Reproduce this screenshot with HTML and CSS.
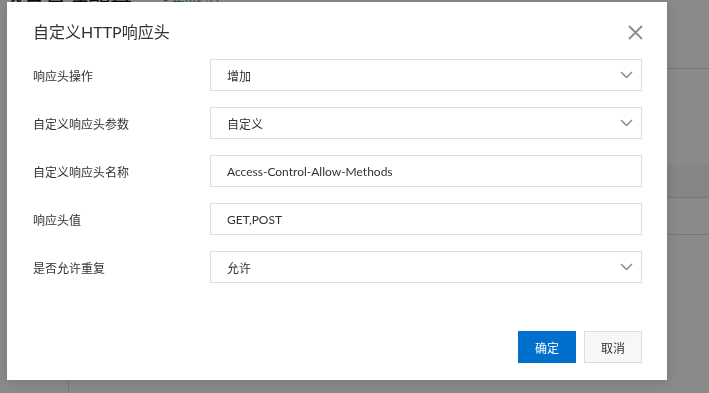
FILE: index.html
```html
<!DOCTYPE html>
<html lang="zh-CN">
<head>
  <meta charset="UTF-8">
  <meta name="viewport" content="width=device-width, initial-scale=1.0">
  <title>自定义HTTP响应头</title>
  <link rel="stylesheet" href="styles.css">
</head>
<body>
  <!-- page behind the dialog -->
  <div class="page">
    <div class="page-head">
      <h2 class="page-title">域名管理配置</h2>
      <span class="page-status">● 正常运行</span>
    </div>
    <div class="page-body">
      <div class="side"></div>
      <div class="main">
        <div class="main-row"></div>
        <div class="main-row shaded"></div>
        <div class="main-row short"></div>
      </div>
    </div>
  </div>

  <div class="mask"></div>

  <!-- dialog -->
  <div class="dialog">
    <div class="dialog-head">
      <h3 class="dialog-title">自定义HTTP响应头</h3>
      <button class="close-btn" aria-label="关闭">
        <svg width="15" height="15" viewBox="0 0 15 15"><path d="M1 1L14 14M14 1L1 14" stroke="#8c8c8c" stroke-width="1.8" fill="none"/></svg>
      </button>
    </div>

    <div class="form">
      <div class="form-row">
        <label class="form-label">响应头操作</label>
        <div class="field select">
          <span>增加</span>
          <svg class="arrow" width="13" height="8" viewBox="0 0 13 8"><path d="M1 1L6.5 6.5L12 1" stroke="#888" stroke-width="1.5" fill="none"/></svg>
        </div>
      </div>
      <div class="form-row">
        <label class="form-label">自定义响应头参数</label>
        <div class="field select">
          <span>自定义</span>
          <svg class="arrow" width="13" height="8" viewBox="0 0 13 8"><path d="M1 1L6.5 6.5L12 1" stroke="#888" stroke-width="1.5" fill="none"/></svg>
        </div>
      </div>
      <div class="form-row">
        <label class="form-label">自定义响应头名称</label>
        <div class="field"><span>Access-Control-Allow-Methods</span></div>
      </div>
      <div class="form-row">
        <label class="form-label">响应头值</label>
        <div class="field"><span>GET,POST</span></div>
      </div>
      <div class="form-row">
        <label class="form-label">是否允许重复</label>
        <div class="field select">
          <span>允许</span>
          <svg class="arrow" width="13" height="8" viewBox="0 0 13 8"><path d="M1 1L6.5 6.5L12 1" stroke="#888" stroke-width="1.5" fill="none"/></svg>
        </div>
      </div>
    </div>

    <div class="dialog-foot">
      <button class="btn btn-primary">确定</button>
      <button class="btn">取消</button>
    </div>
  </div>
</body>
</html>
```

FILE: styles.css
```css
* {
  box-sizing: border-box;
}

body {
  margin: 0;
  font-family: "Lato", "Noto Sans CJK SC", sans-serif;
  color: #333;
  background: #fff;
  height: 100vh;
  overflow: hidden;
}

/* background page */
.page {
  height: 100%;
}

.page-head {
  display: flex;
  align-items: flex-end;
  gap: 30px;
  height: 4px;
  overflow: hidden;
}

.page-title {
  margin: 0;
  font-size: 22px;
  line-height: 24px;
  font-weight: 400;
  color: #111;
  flex-shrink: 0;
}

.page-status {
  font-size: 12px;
  line-height: 12px;
  color: #2e9c3e;
}

.page-body {
  display: flex;
  height: 100%;
}

.side {
  width: 69px;
  border-right: 1px solid #ddd;
}

.main {
  flex: 1;
  padding-top: 64px;
}

.main-row {
  height: 97px;
  border-top: 1px solid #ddd;
}

.main-row.shaded {
  height: 33px;
  background: #f5f5f5;
  border-top: none;
  border-bottom: 1px solid #ddd;
}

.main-row.short {
  height: 37px;
  border-top: none;
  border-bottom: 1px solid #ddd;
}

.mask {
  position: fixed;
  inset: 0;
  background: rgba(0, 0, 0, 0.46);
}

/* dialog */
.dialog {
  position: fixed;
  left: 7px;
  top: 2px;
  width: 660px;
  height: 378px;
  background: #fff;
  padding: 18px 25px 17px 26px;
  display: flex;
  flex-direction: column;
  box-shadow: 0 2px 12px rgba(0, 0, 0, 0.15);
}

.dialog-head {
  display: flex;
  justify-content: space-between;
  align-items: center;
  height: 24px;
}

.dialog-title {
  margin: 0;
  font-size: 16px;
  line-height: 24px;
  font-weight: 400;
  color: #333;
}

.close-btn {
  border: none;
  background: none;
  padding: 0;
  margin-right: -1px;
  width: 15px;
  height: 15px;
  display: flex;
}

.form {
  display: flex;
  flex-direction: column;
  gap: 16px;
  margin-top: 15px;
}

.form-row {
  display: flex;
  align-items: center;
}

.form-label {
  width: 177px;
  font-size: 12px;
  color: #333;
}

.field {
  flex: 1;
  height: 32px;
  border: 1px solid #ddd;
  padding: 0 8px 0 16px;
  display: flex;
  align-items: center;
  justify-content: space-between;
  font-size: 12px;
  color: #333;
}

.dialog-foot {
  margin-top: auto;
  display: flex;
  justify-content: flex-end;
  gap: 8px;
}

.btn {
  width: 58px;
  height: 32px;
  font-family: inherit;
  font-size: 12px;
  color: #333;
  background: #f7f7f7;
  border: 1px solid #ddd;
  padding: 0;
}

.btn-primary {
  background: #0070cc;
  border-color: #0070cc;
  color: #fff;
}
```
